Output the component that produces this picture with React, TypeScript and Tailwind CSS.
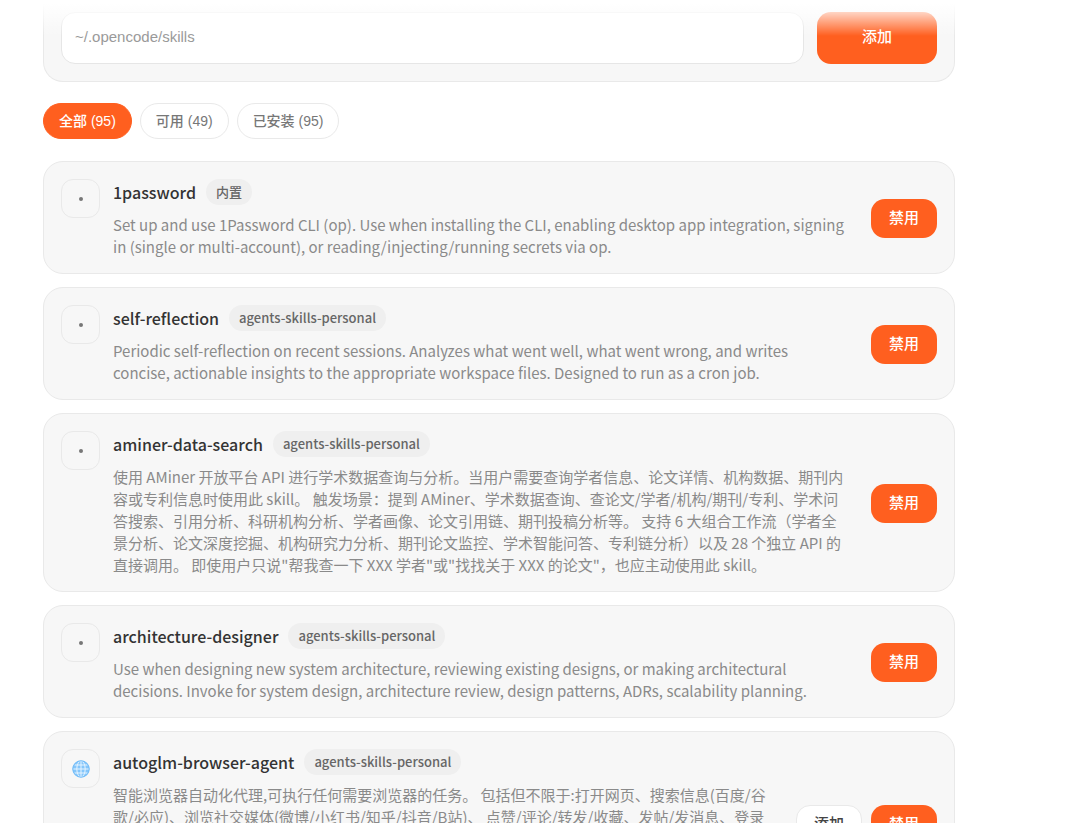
import React from 'react'

type Skill = {
    name: string
    tag: string
    description: string
    icon?: 'globe'
    addable?: boolean
}

const tabs = [
    { label: '全部', count: 95 },
    { label: '可用', count: 49 },
    { label: '已安装', count: 95 },
]

const skills: Skill[] = [
    {
        name: '1password',
        tag: '内置',
        description:
            'Set up and use 1Password CLI (op). Use when installing the CLI, enabling desktop app integration, signing in (single or multi-account), or reading/injecting/running secrets via op.',
    },
    {
        name: 'self-reflection',
        tag: 'agents-skills-personal',
        description:
            'Periodic self-reflection on recent sessions. Analyzes what went well, what went wrong, and writes concise, actionable insights to the appropriate workspace files. Designed to run as a cron job.',
    },
    {
        name: 'aminer-data-search',
        tag: 'agents-skills-personal',
        description:
            '使用 AMiner 开放平台 API 进行学术数据查询与分析。当用户需要查询学者信息、论文详情、机构数据、期刊内容或专利信息时使用此 skill。 触发场景：提到 AMiner、学术数据查询、查论文/学者/机构/期刊/专利、学术问答搜索、引用分析、科研机构分析、学者画像、论文引用链、期刊投稿分析等。 支持 6 大组合工作流（学者全景分析、论文深度挖掘、机构研究力分析、期刊论文监控、学术智能问答、专利链分析）以及 28 个独立 API 的直接调用。 即使用户只说"帮我查一下 XXX 学者"或"找找关于 XXX 的论文"，也应主动使用此 skill。',
    },
    {
        name: 'architecture-designer',
        tag: 'agents-skills-personal',
        description:
            'Use when designing new system architecture, reviewing existing designs, or making architectural decisions. Invoke for system design, architecture review, design patterns, ADRs, scalability planning.',
    },
    {
        name: 'autoglm-browser-agent',
        tag: 'agents-skills-personal',
        icon: 'globe',
        addable: true,
        description:
            '智能浏览器自动化代理,可执行任何需要浏览器的任务。 包括但不限于:打开网页、搜索信息(百度/谷歌/必应)、浏览社交媒体(微博/小红书/知乎/抖音/B站)、 点赞/评论/转发/收藏、发帖/发消息、登录',
    },
]

const Globe = () => (
    <svg width="18" height="18" viewBox="0 0 18 18" fill="none" aria-hidden="true">
        <circle cx="9" cy="9" r="8.5" fill="#84c6fb" />
        <g stroke="#e6f4ff" strokeWidth="1">
            <path d="M9 1v16M1 9h16M2.5 5h13M2.5 13h13" />
            <ellipse cx="9" cy="9" rx="4.2" ry="8" />
        </g>
        <circle cx="9" cy="9" r="8.2" stroke="#74bdf8" strokeWidth="1" />
    </svg>
)

const SkillCard = ({ skill }: { skill: Skill }) => {
    return (
        <li
            className={`flex items-center gap-6 rounded-[20px] border border-[#e9e9e9] bg-[#f7f7f7] px-[17px] pt-[17px] pb-[15px] ${
                skill.addable ? 'min-h-[185px]' : ''
            }`}
        >
            <div className="flex min-w-0 flex-1 items-start gap-[13px] self-start">
                <div className="flex size-[39px] shrink-0 items-center justify-center rounded-xl border border-[#e9e9e9]">
                    {skill.icon === 'globe' ? <Globe /> : <span className="size-1 rounded-full bg-[#777]" />}
                </div>
                <div className="min-w-0 flex-1">
                    <div className="flex items-center gap-[10px]">
                        <h2 className="text-[16px] leading-[26px] font-medium text-[#333]">{skill.name}</h2>
                        <span className="rounded-full bg-[#efefef] px-[10px] text-[13px] leading-[26px] font-medium text-[#666]">
                            {skill.tag}
                        </span>
                    </div>
                    <p className="mt-[9px] text-[15px] leading-[22px] text-[#8a8a8a]">{skill.description}</p>
                </div>
            </div>
            <div className="flex shrink-0 gap-[9px]">
                {skill.addable && (
                    <button
                        type="button"
                        className="h-[39px] w-[66px] rounded-[14px] border border-[#e9e9e9] bg-white pb-[2px] text-[15px] font-medium text-[#444]"
                    >
                        添加
                    </button>
                )}
                <button
                    type="button"
                    className="h-[39px] w-[66px] rounded-[14px] bg-[#ff5f1f] pb-[3px] text-[15px] font-medium text-white"
                >
                    禁用
                </button>
            </div>
        </li>
    )
}

const App = () => {
    return (
        <main className="relative h-screen overflow-hidden bg-white pr-[125px] pl-[43px] font-['Noto_Sans_CJK_SC',sans-serif]">
            <form className="flex gap-[13px] rounded-b-[20px] border-x border-b border-[#e9e9e9] bg-[#f7f7f7] px-[17px] pt-3 pb-[17px]">
                <input
                    type="text"
                    aria-label="技能目录"
                    placeholder="~/.opencode/skills"
                    className="h-[52px] min-w-0 flex-1 rounded-[14px] border border-[#e6e6e6] bg-white px-[13px] pb-1 font-['Liberation_Sans','Noto_Sans_CJK_SC',sans-serif] text-[15px] placeholder:text-[#999]"
                />
                <button
                    type="button"
                    className="h-[52px] w-[120px] rounded-[14px] bg-[#ff5f1f] pb-1 text-[15px] font-medium text-white"
                >
                    添加
                </button>
            </form>
            {/* top fade over scrolled content */}
            <div className="pointer-events-none absolute inset-x-0 top-0 h-9 bg-linear-to-b from-white from-10% to-transparent" />

            <div className="mt-[21px] flex gap-2 font-['Liberation_Sans','Noto_Sans_CJK_SC',sans-serif]">
                {tabs.map((tab, i) => (
                    <button
                        key={tab.label}
                        type="button"
                        className={`h-9 rounded-full border px-[15px] text-[14px] font-medium ${
                            i === 0
                                ? 'border-[#ff5f1f] bg-[#ff5f1f] text-white'
                                : 'border-[#e9e9e9] bg-white text-[#777]'
                        }`}
                    >
                        {tab.label} ({tab.count})
                    </button>
                ))}
            </div>

            <ul className="mt-[22px] flex flex-col gap-[13px]">
                {skills.map((skill) => (
                    <SkillCard key={skill.name} skill={skill} />
                ))}
            </ul>
        </main>
    )
}

export default App
